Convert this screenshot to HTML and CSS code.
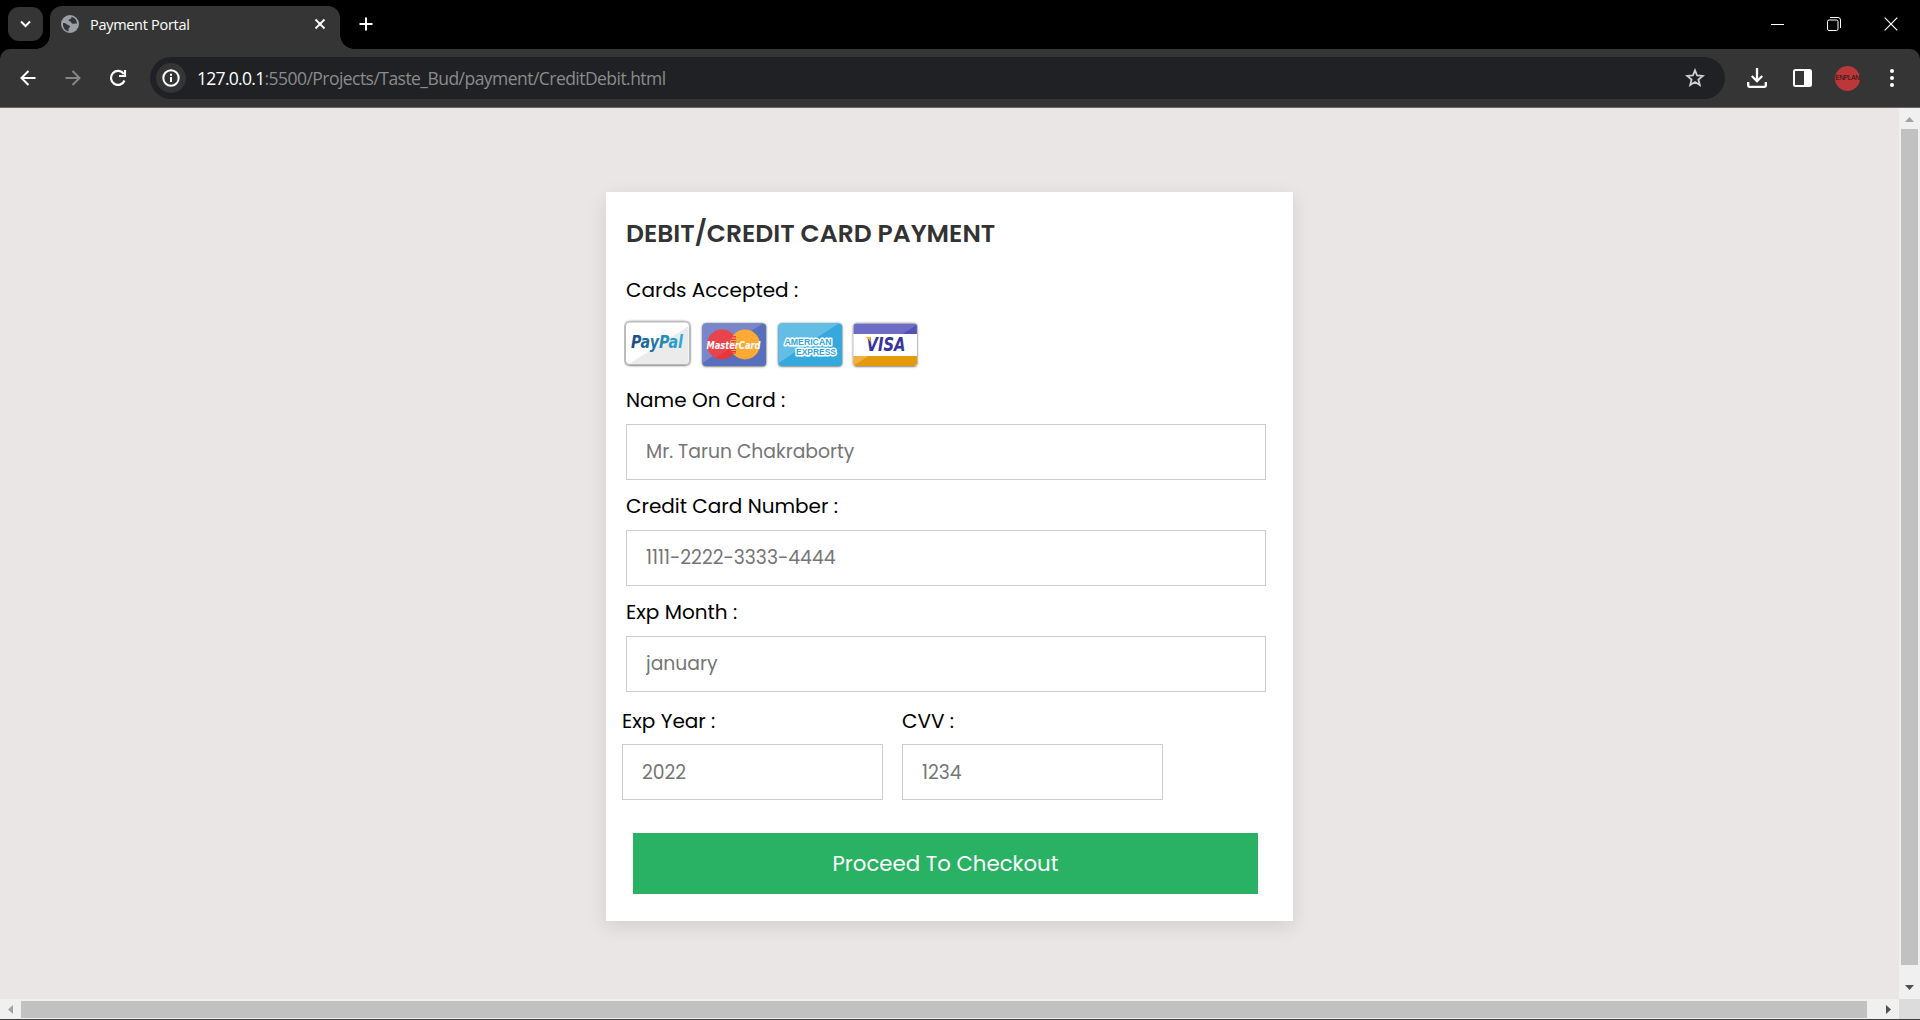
FILE: index.html
```html
<!DOCTYPE html>
<html lang="en">
<head>
<meta charset="utf-8">
<title>Payment Portal</title>
<link rel="stylesheet" href="styles.css">
</head>
<body>
<div class="browser">
  <header class="tabstrip">
    <button class="tab-search" aria-label="Search tabs"><svg width="35" height="34" viewBox="0 0 35 34" fill="none" stroke="#fff" stroke-width="2"><path d="M13 14.500l4.500 4.500 4.500-4.500"/></svg></button>
    <div class="tab">
      <svg class="globe" width="18" height="18" viewBox="0 0 18 18"><circle cx="9" cy="9" r="9" fill="#9aa0a6"/><path d="M2 8c2 0 3 .3 4.500 1.800 1 1 2.500.2 2.500 1.800s-1.500 1-1.500 2.600v2.200C4 16 1.700 12.500 2 8zM10.500 2c-.2 1.500-.5 2-2 2.200C7 4.500 7.500 6 8.800 6.200c1.500.2 1 1.800 2.400 2.400 1.500.6 2.300-.7 4.800.2C16 5 13.500 2.500 10.500 2z" fill="#353535"/></svg>
      <span class="tab-title">Payment Portal</span>
      <svg class="tab-close" width="12" height="12" viewBox="0 0 12 12" stroke="#fff" stroke-width="1.900"><path d="M1.500 1.500l9 9M10.500 1.500l-9 9"/></svg>
    </div>
    <svg class="new-tab" width="14" height="14" viewBox="0 0 14 14" stroke="#fff" stroke-width="2"><path d="M7 .5v13M.5 7h13"/></svg>
    <div class="window-controls">
      <svg width="13" height="13" viewBox="0 0 13 13"><path d="M0 6.500h13" stroke="#fff"/></svg>
      <svg width="14" height="14" viewBox="0 0 14 14" fill="none" stroke="#fff"><rect x=".5" y="3" width="10.500" height="10.500" rx="1.500"/><path d="M3 .5h8a2.500 2.500 0 0 1 2.500 2.500v8"/></svg>
      <svg width="14" height="14" viewBox="0 0 14 14" stroke="#fff" stroke-width="1.200"><path d="M.7.7l12.600 12.600M13.300.7L.7 13.300"/></svg>
    </div>
  </header>
  <nav class="toolbar">
    <svg class="back" width="16" height="16" viewBox="0 0 16 16" fill="none" stroke="#fff" stroke-width="2"><path d="M15.500 8H2M8.500 1L1.500 8l7 7"/></svg>
    <svg class="forward" width="16" height="16" viewBox="0 0 16 16" fill="none" stroke="#868686" stroke-width="2"><path d="M.5 8H14M7.500 1l7 7-7 7"/></svg>
    <svg class="reload" width="18" height="18" viewBox="0 0 18 18" fill="none" stroke="#fff" stroke-width="2.200"><path d="M15.500 11.500A7 7 0 1 1 14.800 5M16 1v6h-6"/></svg>
    <div class="omnibox">
      <span class="site-info"><svg width="18" height="18" viewBox="0 0 18 18" fill="none" stroke="#fff" stroke-width="2"><circle cx="9" cy="9" r="7.700"/><path d="M9 8v5M9 4.800v2"/></svg></span>
      <span class="url"><span class="host">127.0.0.1</span>:5500/Projects/Taste_Bud/payment/CreditDebit.html</span>
      <svg class="star" width="20" height="20" viewBox="0 0 20 20" fill="none" stroke="#d0d0d0" stroke-width="1.800"><path d="M10 2.300l2.100 5.200 5.700.4-4.400 3.600 1.400 5.500-4.800-3-4.800 3 1.400-5.500-4.400-3.600 5.700-.4z"/></svg>
    </div>
    <div class="actions">
      <svg width="20" height="20" viewBox="0 0 20 20" fill="none" stroke="#fff" stroke-width="2.300"><path d="M10 0v13M4.800 8l5.200 5.200L15.200 8M1.200 14v3.200q0 1.600 1.600 1.600h14.400q1.600 0 1.600-1.600V14"/></svg>
      <svg class="side-panel" width="19" height="18" viewBox="0 0 19 18"><rect x="1" y="1" width="17" height="16" rx="1.500" fill="none" stroke="#fff" stroke-width="2"/><path d="M11 1h7v16h-7z" fill="#fff"/></svg>
      <span class="avatar">ENPLAN</span>
      <svg class="more" width="4" height="18" viewBox="0 0 4 18" fill="#fff"><circle cx="2" cy="2" r="2"/><circle cx="2" cy="9" r="2"/><circle cx="2" cy="16" r="2"/></svg>
    </div>
  </nav>
  <div class="viewport">
    <main class="page">
      <form class="payment">
        <h1>DEBIT/CREDIT CARD PAYMENT</h1>
        <div class="label">Cards Accepted :</div>
        <svg class="brands" width="300" height="50" viewBox="0 0 300 50">
          <defs>
            <linearGradient id="pp" x1="0" x2="1"><stop offset="0" stop-color="#1b4a80"/><stop offset="1" stop-color="#2bb0dc"/></linearGradient>
            <filter id="soft" x="-5%" y="-5%" width="110%" height="115%"><feDropShadow dx="0" dy=".3" stdDeviation=".8" flood-color="#333" flood-opacity="1"/></filter>
          </defs>
          <g filter="url(#soft)">
            <rect x="1.500" y="3" width="64" height="42.500" rx="4" fill="#fff" stroke="#bbb"/>
            <rect x="78.500" y="4.500" width="63.500" height="42.500" rx="3.500" fill="#5870bc"/>
            <rect x="154.500" y="4.500" width="63.500" height="42.500" rx="3.500" fill="#36a9dc"/>
            <rect x="229.500" y="4.500" width="63.500" height="42.500" rx="3" fill="#fff"/>
          </g>
          <path d="M64.500 7v35q0 3-3 3H5z" fill="#ebebeb"/>
          <text x="7" y="29" class="brand-paypal" textLength="52" lengthAdjust="spacingAndGlyphs" fill="url(#pp)">PayPal</text>
          <g transform="translate(-.5)">
          <path d="M79 44V8q0-3.500 3.500-3.500H139z" fill="#7987ca"/>
          <circle cx="98.500" cy="25.500" r="15" fill="#e8343f"/><circle cx="121.500" cy="25.500" r="15" fill="#fdaa35"/>
          <path d="M110 17v18" stroke="#e8343f" stroke-width="5" stroke-dasharray="1.500 1"/>
          <path d="M83.500 26a15 15 0 0 1 30-1L92 39a15 15 0 0 1-8.500-13z" fill="#fff" opacity=".08"/>
          <text x="83" y="29.500" class="brand-master" textLength="54" lengthAdjust="spacingAndGlyphs">MasterCard</text>
          <path d="M155 44V8q0-3.500 3.500-3.500H215z" fill="#63bde5"/>
          <text x="161" y="25.500" class="brand-amex" textLength="47" lengthAdjust="spacingAndGlyphs">AMERICAN</text>
          <text x="172.500" y="36" class="brand-amex" textLength="40" lengthAdjust="spacingAndGlyphs">EXPRESS</text>
          <path d="M230 15V7.500q0-3 3-3h57.500q3 0 3 3V15z" fill="#6e6dc6"/><path d="M279 15l14-9v9z" fill="#5352b7"/>
          <path d="M230 37h63.500v7q0 3-3 3H233q-3 0-3-3z" fill="#e59a0b"/><path d="M230 37h15l-14 9z" fill="#edb147"/>
          <text x="243" y="32" class="brand-visa" textLength="39" lengthAdjust="spacingAndGlyphs">VISA</text>
          <path d="M241.500 18h5l1 6q-2-4.500-6-6z" fill="#f6b51e"/>
          </g>
        </svg>
        <label class="label" for="name">Name On Card :</label>
        <input id="name" type="text" placeholder="Mr. Tarun Chakraborty">
        <label class="label" for="number">Credit Card Number :</label>
        <input id="number" type="text" placeholder="1111-2222-3333-4444">
        <label class="label" for="month">Exp Month :</label>
        <input id="month" type="text" placeholder="january">
        <div class="split">
          <div><label class="label" for="year">Exp Year :</label><input id="year" type="text" placeholder="2022"></div>
          <div><label class="label" for="cvv">CVV :</label><input id="cvv" type="text" placeholder="1234"></div>
        </div>
        <button class="checkout" type="submit">Proceed To Checkout</button>
      </form>
    </main>
    <div class="vscroll"><svg width="21" height="21"><path d="M6 14h9l-4.500-5z" fill="#a3a3a3"/></svg><i></i><svg width="21" height="34"><path d="M6 20h9l-4.500 5z" fill="#505050"/></svg></div>
    <div class="hscroll"><svg width="21" height="20"><path d="M13 6v9l-5-4.500z" fill="#a3a3a3"/></svg><i></i><svg width="32" height="20"><path d="M19 6v9l5-4.500z" fill="#505050"/></svg></div>
    <div class="corner"></div>
  </div>
</div>
</body>
</html>
```
FILE: styles.css
```css
* { box-sizing: border-box; }
body { margin: 0; overflow: hidden; font-family: Poppins, Inter, "Liberation Sans", sans-serif; }
svg { display: block; flex: none; }
.browser { width: 1920px; height: 1020px; display: flex; flex-direction: column; background: #000; border-bottom: 1px solid #404040; }

/* Tab strip */
.tabstrip { height: 49px; flex: none; display: flex; align-items: flex-start; padding: 6px 22px 0 8px; }
.tab-search { width: 35px; height: 34px; margin-top: 1px; padding: 0; border: 0; border-radius: 11px; background: #353535; }
.tab { position: relative; width: 290px; height: 43px; margin-left: 7px; padding: 0 14px 7px 11px; display: flex; align-items: center; border-radius: 12px 12px 0 0; background: #353535; }
.tab::before, .tab::after { content: ""; position: absolute; bottom: 0; width: 14px; height: 14px; }
.tab::before { left: -14px; background: radial-gradient(circle at 0 0, transparent 13.500px, #353535 14px); }
.tab::after { right: -14px; background: radial-gradient(circle at 100% 0, transparent 13.500px, #353535 14px); }
.tab-title { flex: none; margin: 1px 0 0 11px; font: 14.500px/20px "Open Sans", "Noto Sans", sans-serif; letter-spacing: -0.300px; color: #fff; }
.tab-close { margin-left: auto; }
.new-tab { margin: 11px 0 0 19px; }
.window-controls { margin: 11px 0 0 auto; display: flex; gap: 43px; align-items: center; }

/* Toolbar */
.toolbar { height: 59px; flex: none; display: flex; align-items: center; padding: 0 26px 0 20px; background: #353535; border-bottom: 1px solid #666; border-radius: 10px 10px 0 0; }
.forward { margin-left: 29px; }
.reload { margin-left: 28px; }
.omnibox { width: 1575px; height: 42px; margin-left: 23px; padding: 0 20px 0 6px; display: flex; align-items: center; border-radius: 21px; background: #202124; }
.site-info { width: 30px; height: 30px; display: grid; place-items: center; border-radius: 50%; background: #353535; }
.url { margin-left: 11px; font: 17.500px/26px "Open Sans", "Noto Sans", sans-serif; letter-spacing: -0.540px; color: #8b8b8b; white-space: nowrap; }
.host { color: #fff; letter-spacing: -0.700px; }
.star { margin-left: auto; }
.actions { margin-left: 22px; display: flex; align-items: center; }
.side-panel { margin-left: 26px; }
.avatar { width: 25px; height: 25px; margin-left: 23px; display: grid; place-items: center; border-radius: 50%; background: #bb3739; font: 6.500px/1 "Liberation Sans", sans-serif; letter-spacing: -0.300px; color: #221012; }
.more { margin-left: 30px; }

/* Page and scrollbars */
.viewport { flex: 1; display: grid; grid-template: 1fr 20px / 1fr 21px; background: #f0f0f0; }
.page { background: #eae6e5; padding: 84px 0 0 606px; overflow: hidden; }
.vscroll { display: flex; flex-direction: column; align-items: center; }
.vscroll i { flex: 1; width: 17px; background: #c1c1c1; }
.hscroll { display: flex; align-items: center; }
.hscroll i { flex: 1; height: 17px; margin-top: 1px; background: #c1c1c1; }
.corner { background: #dcdcdc; }

/* Payment form */
.payment { width: 687px; height: 729px; padding: 24px 27px 27px 20px; background: #fff; box-shadow: 0 6px 19px rgba(0, 0, 0, .1); }
h1 { margin: 0; font-size: 25px; line-height: 36px; font-weight: 600; color: #333; }
.label { display: block; height: 30px; font-size: 20px; line-height: 30px; font-weight: 400; color: #000; white-space: nowrap; }
h1 + .label { margin-top: 23px; }
.brands { margin: 14px 0 0 -2px; }
.brands + .label { margin-top: 16px; }
input { display: block; width: 640px; height: 56px; margin: 9px 0 0; padding: 0 19px 1px; border: 1px solid #ccc; border-radius: 0; background: #fff; font: 400 18.750px/30px Poppins, Inter, sans-serif; }
input + .label { margin-top: 11px; }
input::placeholder { color: #757575; opacity: 1; }
.split { display: flex; gap: 19px; margin: 14px 0 0 -4px; }
.split input { width: 261px; margin-top: 8px; padding-bottom: 0; }
.checkout { display: block; width: 625px; height: 61px; margin: 33px 0 0 7px; padding: 0; border: 0; background: #29b263; color: #fff; font: 400 21.250px/30px Poppins, Inter, sans-serif; }

/* Card brands */
.brands text { font-family: "DejaVu Sans", "Open Sans", sans-serif; font-weight: 700; font-style: italic; }
.brands .brand-paypal { font-size: 17px; }
.brands .brand-master { font-size: 10px; fill: #fff; }
.brands .brand-amex { font: 700 9.500px "Liberation Sans", sans-serif; fill: #2fa5da; stroke: #fff; stroke-width: 3px; stroke-linejoin: round; paint-order: stroke; }
.brands .brand-visa { font-size: 19px; fill: #37349b; }
```
